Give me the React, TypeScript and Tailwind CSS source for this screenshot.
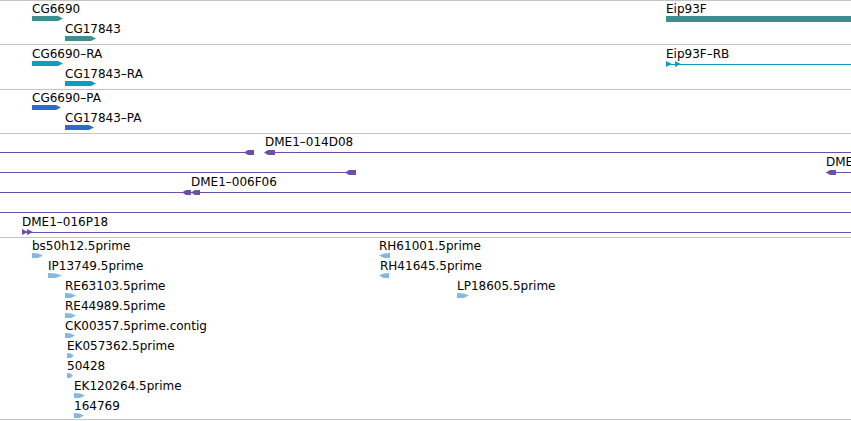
import React from 'react'

const GENE = '#3e8e90'
const TX = '#0d9dc1'
const PROT = '#2f6bc9'
const BAC = '#6c4fa6'
const EST = '#84b8df'

type Dir = 'r' | 'l'

// bar with a pointed end
function Arrow({ w, h = 5, color, dir = 'r', tip = 5 }: { w: number; h?: number; color: string; dir?: Dir; tip?: number }) {
  const pts =
    dir === 'r'
      ? `0,0 ${w - tip},0 ${w},${h / 2} ${w - tip},${h} 0,${h}`
      : `0,${h / 2} ${tip},0 ${w},0 ${w},${h} ${tip},${h}`
  return (
    <svg width={w} height={h} className="block shrink-0">
      <polygon points={pts} fill={color} />
    </svg>
  )
}

// small wedge used for ESTs
function Wedge({ w, dir = 'r' }: { w: number; dir?: Dir }) {
  const pts =
    dir === 'r'
      ? `0,0 ${w * 0.55},0.6 ${w},2.5 ${w * 0.55},5 0,5`
      : `0,2.5 ${w * 0.45},0.6 ${w},0 ${w},5 ${w * 0.45},5`
  return (
    <svg width={w} height={5} className="block">
      <polygon points={pts} fill={EST} />
    </svg>
  )
}

function Tri({ color }: { color: string }) {
  return (
    <svg width={6} height={6} className="block">
      <polygon points="0,0 6,3 0,6" fill={color} />
    </svg>
  )
}

// one feature on a row: label above, glyph below, placed at its coordinate
function Feature({ x, label, children, lx = 0 }: { x: number; label?: string; children: React.ReactNode; lx?: number }) {
  return (
    <div className="absolute top-0 flex flex-col gap-0" style={{ left: x }}>
      <div className="h-[14px] whitespace-nowrap text-[12px] leading-[14px] text-black" style={{ marginLeft: lx }}>
        {label}
      </div>
      <div className="flex">{children}</div>
    </div>
  )
}

// a BAC row: the clone line sits 17px under the label
function Span({ x1, x2, color }: { x1: number; x2: number; color: string }) {
  return <div className="absolute top-[17px] h-px" style={{ left: x1, width: x2 - x1, background: color }} />
}

function Row({ children }: { children: React.ReactNode }) {
  return <div className="relative h-[20px]">{children}</div>
}

const ests: { label: string; x: number; w: number; row: number; dir?: Dir; lx?: number }[] = [
  { label: 'bs50h12.5prime', x: 32, w: 11, row: 0 },
  { label: 'IP13749.5prime', x: 48, w: 14, row: 1 },
  { label: 'RE63103.5prime', x: 65, w: 11, row: 2 },
  { label: 'RE44989.5prime', x: 65, w: 11, row: 3 },
  { label: 'CK00357.5prime.contig', x: 65, w: 10, row: 4 },
  { label: 'EK057362.5prime', x: 67, w: 7, row: 5 },
  { label: '50428', x: 67, w: 6, row: 6 },
  { label: 'EK120264.5prime', x: 74, w: 11, row: 7 },
  { label: '164769', x: 74, w: 10, row: 8 },
  { label: 'RH61001.5prime', x: 379, w: 11, row: 0, dir: 'l' },
  { label: 'RH41645.5prime', x: 379, w: 10, row: 1, dir: 'l', lx: 1 },
  { label: 'LP18605.5prime', x: 457, w: 12, row: 2 },
]

export default function App() {
  const estRows = Array.from({ length: 9 }, (_, i) => ests.filter((e) => e.row === i))

  return (
    <div className="flex h-[421px] w-[851px] flex-col overflow-hidden bg-white font-['DejaVu_Sans',sans-serif]">
      {/* genes */}
      <div className="flex h-[45px] flex-col border-y border-[#c4c4c4] pt-px">
        <Row>
          <Feature x={32} label="CG6690"><Arrow w={31} color={GENE} /></Feature>
          <Feature x={666} label="Eip93F">
            <div className="h-[6px] w-[185px]" style={{ background: GENE }} />
          </Feature>
        </Row>
        <Row>
          <Feature x={65} label="CG17843"><Arrow w={31} color={GENE} /></Feature>
        </Row>
      </div>

      {/* transcripts */}
      <div className="flex h-[45px] flex-col border-b border-[#c4c4c4] pt-[2px]">
        <Row>
          <Feature x={32} label="CG6690–RA"><Arrow w={31} color={TX} /></Feature>
          <Feature x={666} label="Eip93F–RB">
            <div className="relative flex h-[6px] w-[185px] items-center gap-[3px]">
              <div className="absolute inset-x-0 top-[3px] h-px" style={{ background: TX }} />
              <Tri color={TX} />
              <Tri color={TX} />
            </div>
          </Feature>
        </Row>
        <Row>
          <Feature x={65} label="CG17843–RA"><Arrow w={31} color={TX} /></Feature>
        </Row>
      </div>

      {/* proteins */}
      <div className="flex h-[44px] flex-col border-b border-[#c4c4c4] pt-px">
        <Row>
          <Feature x={32} label="CG6690–PA"><Arrow w={29} color={PROT} /></Feature>
        </Row>
        <Row>
          <Feature x={65} label="CG17843–PA"><Arrow w={29} color={PROT} /></Feature>
        </Row>
      </div>

      {/* BAC clones */}
      <div className="flex h-[104px] flex-col border-b border-[#c4c4c4] pt-px">
        <Row>
          <Span x1={0} x2={254} color={BAC} />
          <Span x1={265} x2={851} color={BAC} />
          <Feature x={244}><div className="mt-[1px]"><Arrow w={10} color={BAC} dir="l" tip={4} /></div></Feature>
          <Feature x={264} label="DME1–014D08" lx={1}><div className="mt-[1px]"><Arrow w={11} color={BAC} dir="l" tip={4} /></div></Feature>
        </Row>
        <Row>
          <Span x1={0} x2={356} color={BAC} />
          <Span x1={826} x2={851} color={BAC} />
          <Feature x={345}><div className="mt-[1px]"><Arrow w={11} color={BAC} dir="l" tip={4} /></div></Feature>
          <Feature x={826} label="DME1–010A01"><div className="mt-[1px]"><Arrow w={10} color={BAC} dir="l" tip={4} /></div></Feature>
        </Row>
        <Row>
          <Span x1={0} x2={851} color={BAC} />
          <Feature x={182} label="DME1–006F06" lx={9}>
            <div className="mt-[1px] flex">
              <Arrow w={9} color={BAC} dir="l" tip={4} />
              <Arrow w={9} color={BAC} dir="l" tip={4} />
            </div>
          </Feature>
        </Row>
        <Row>
          <Span x1={0} x2={851} color={BAC} />
        </Row>
        <Row>
          <Span x1={22} x2={851} color={BAC} />
          <Feature x={22} label="DME1–016P18">
            <div className="mt-[0px] flex -space-x-px">
              <Tri color={BAC} />
              <Tri color={BAC} />
            </div>
          </Feature>
        </Row>
      </div>

      {/* ESTs */}
      <div className="flex h-[182px] flex-col border-b border-[#c4c4c4] pt-px">
        {estRows.map((row, i) => (
          <Row key={i}>
            {row.map((e) => (
              <Feature key={e.label} x={e.x} label={e.label} lx={e.lx}>
                <Wedge w={e.w} dir={e.dir} />
              </Feature>
            ))}
          </Row>
        ))}
      </div>
    </div>
  )
}
